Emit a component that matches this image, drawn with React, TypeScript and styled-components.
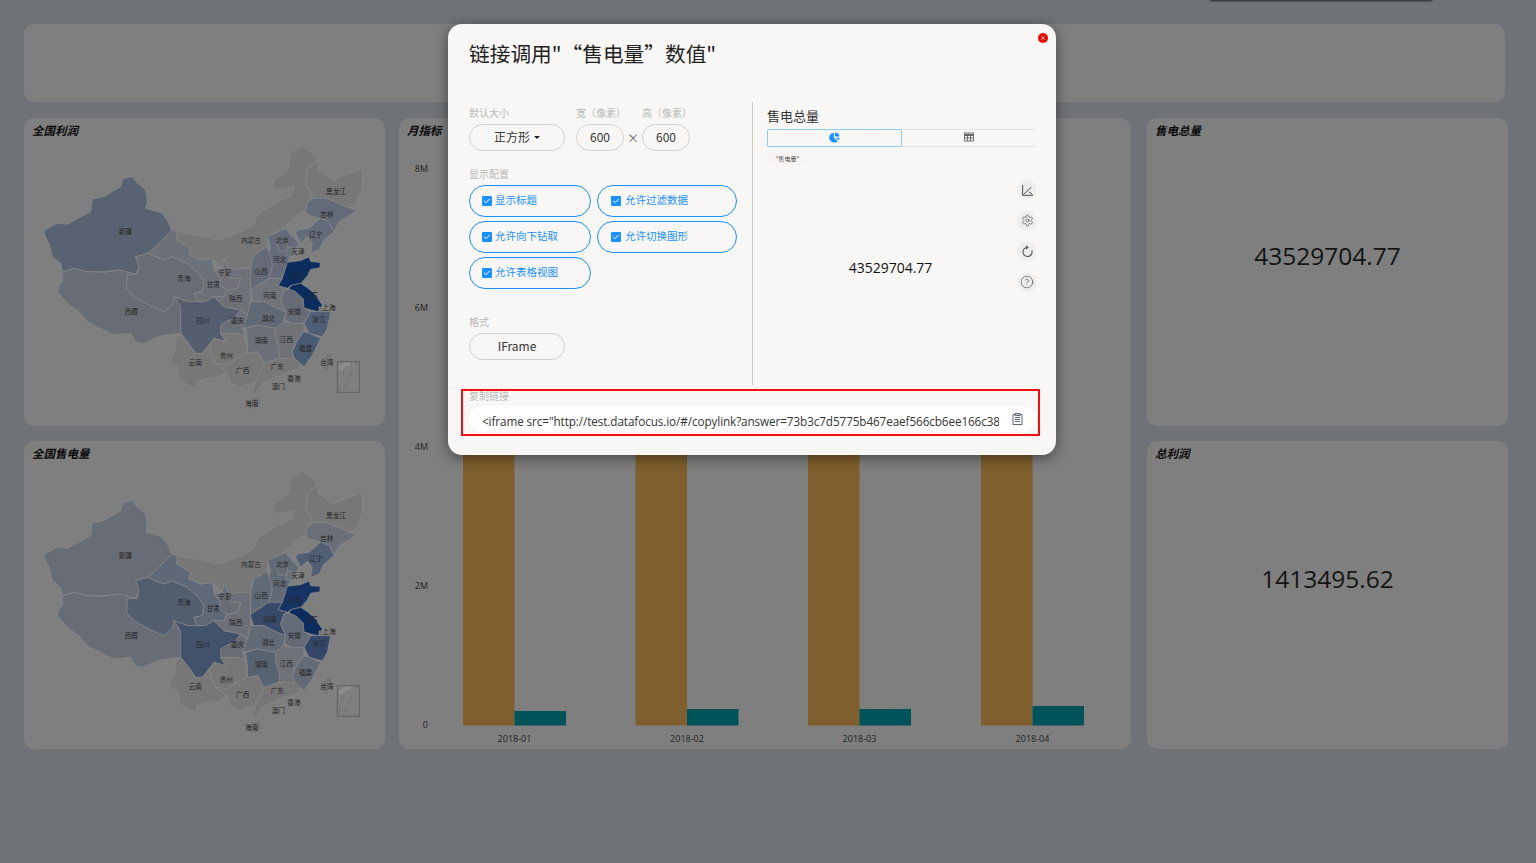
import React from 'react'
import styled, { createGlobalStyle } from 'styled-components'
import { Check, Settings, CircleHelp, X } from 'lucide-react'

const FONT = `"Open Sans", "Noto Sans CJK SC", sans-serif`
const CJK = `"Noto Sans CJK SC", "Open Sans", sans-serif`

const GlobalStyle = createGlobalStyle`
  html, body { margin: 0; padding: 0; height: 100%; overflow: hidden; }
  body { background: #6f7276; font-family: ${FONT}; }
  * { box-sizing: border-box; }
`

const Page = styled.div`
  position: relative;
  width: 1536px;
  height: 863px;
  padding: 24px 0 0 24px;
  overflow: hidden;
`

const TopToast = styled.div`
  position: absolute;
  left: 1210px;
  top: -10px;
  width: 222px;
  height: 10px;
  box-shadow: 0 1px 2px rgba(30, 30, 30, 0.9);
`

const Banner = styled.div`
  width: 1481px;
  height: 78px;
  margin-bottom: 16px;
  background: #7f7f7f;
  border-radius: 10px;
`

const Grid = styled.div`
  display: grid;
  grid-template-columns: 361px 734px 361px;
  grid-template-rows: 308px 308px;
  gap: 15px 14px;
`

const Card = styled.section<{ $tall?: boolean }>`
  background: #7f7f7f;
  border-radius: 10px;
  display: flex;
  flex-direction: column;
  overflow: hidden;
  ${p => p.$tall && 'grid-row: 1 / span 2; grid-column: 2; margin-right: 2px;'}
`

const CardTitle = styled.h3`
  margin: 0;
  height: 24px;
  flex: none;
  padding: 3px 0 0 8px;
  font-family: ${CJK};
  font-size: 11.5px;
  line-height: 18px;
  font-weight: 700;
  font-style: italic;
  color: #0a0a0a;
`

const BigValue = styled.div`
  flex: 1;
  display: flex;
  align-items: center;
  justify-content: center;
  padding: 0 0 57px;
  font-size: 24.5px;
  color: #141414;
`

const MapSvg = styled.svg`
  display: block;
  width: 361px;
  height: 284px;
  text {
    font-family: ${CJK};
    font-size: 20px;
    fill: #262626;
    text-anchor: middle;
  }
`

const ChartSvg = styled.svg`
  display: block;
  width: 732px;
  height: 607px;
  text {
    font-family: ${FONT};
    font-size: 9px;
    fill: #222;
  }
`

type Province = { name: string; points: string; x: number; y: number }

const PROVINCES: Province[] = [
  { name: '新疆', x: 304, y: 351, points: '62,345 100,325 130,328 200,290 205,252 240,245 290,215 298,190 325,185 340,205 365,225 370,265 365,280 410,292 430,315 443,345 405,385 372,415 335,425 345,455 335,478 285,465 240,470 190,470 150,460 115,470 110,445 85,425 75,385 62,360' },
  { name: '西藏', x: 322, y: 589, points: '115,472 150,460 190,470 240,472 285,465 335,478 310,480 308,520 330,545 375,570 420,590 445,570 448,540 470,575 470,655 430,660 400,665 360,685 335,682 320,655 270,660 240,645 190,620 165,590 130,565 100,530 105,510 115,500' },
  { name: '青海', x: 480, y: 492, points: '335,425 372,415 420,435 445,425 490,445 520,470 540,500 535,530 510,535 520,560 490,560 450,545 445,570 420,590 375,570 330,545 308,520 310,480 340,478 345,455' },
  { name: '甘肃', x: 568, y: 509, points: '372,415 405,385 443,345 460,350 458,375 500,400 495,420 530,435 565,430 570,465 590,490 585,510 610,525 600,545 570,545 545,560 520,560 510,535 535,530 540,500 520,470 490,445 445,425 420,435' },
  { name: '内蒙古', x: 681, y: 378, points: '460,350 520,360 585,375 640,355 690,330 700,300 760,260 805,240 810,215 745,225 750,195 790,170 800,115 830,95 860,110 880,135 850,165 845,210 865,240 850,262 845,290 820,300 780,340 730,365 730,395 690,420 680,460 650,460 615,465 600,430 595,460 565,430 530,435 495,420 500,400 458,375' },
  { name: '黑龙江', x: 936, y: 229, points: '880,135 885,165 925,195 1015,160 1015,220 995,270 975,280 945,265 905,250 870,250 850,262 865,240 845,210 850,165' },
  { name: '吉林', x: 908, y: 300, points: '850,262 870,250 905,250 945,265 975,280 997,285 970,305 945,320 930,350 915,320 890,310 855,300 845,290' },
  { name: '辽宁', x: 876, y: 359, points: '820,345 855,340 890,310 915,320 930,350 900,375 885,405 860,415 865,385 850,365 830,385 815,355' },
  { name: '河北', x: 767, y: 433, points: '730,365 785,340 800,360 825,385 815,400 790,395 800,425 790,442 775,490 735,490 745,450 730,430 740,395' },
  { name: '北京', x: 775, y: 377, points: '760,385 790,385 790,405 765,410' },
  { name: '天津', x: 822, y: 410, points: '790,395 815,400 800,425 785,420' },
  { name: '山西', x: 711, y: 470, points: '680,460 690,420 730,395 740,430 745,450 735,490 680,525' },
  { name: '山东', x: 812, y: 483, points: '762,512 775,490 790,442 830,437 855,426 860,440 888,442 888,458 860,463 850,482 835,500 830,505 800,512 790,520' },
  { name: '河南', x: 737, y: 542, points: '680,525 735,490 775,490 762,512 790,520 780,525 770,555 785,590 755,578 720,560 690,560 680,535' },
  { name: '安徽', x: 811, y: 590, points: '795,522 815,530 838,552 840,578 860,590 855,600 840,625 800,625 780,610 785,590 770,555 780,525' },
  { name: '江苏', x: 862, y: 541, points: '800,512 830,505 850,518 870,535 895,570 885,590 860,585 840,578 838,552 815,530 795,522' },
  { name: '上海', x: 915, y: 578, points: '885,575 900,580 895,592 885,590' },
  { name: '浙江', x: 885, y: 615, points: '860,590 885,590 920,590 910,640 895,665 855,655 840,625 855,600' },
  { name: '福建', x: 844, y: 702, points: '840,650 855,655 890,670 865,720 840,755 810,730 805,710 820,675' },
  { name: '江西', x: 787, y: 674, points: '755,640 780,620 800,625 840,625 840,650 820,675 805,710 810,730 765,730 765,700 755,670' },
  { name: '湖北', x: 733, y: 611, points: '655,640 670,600 680,560 720,560 755,578 785,590 780,610 780,620 755,640 700,630' },
  { name: '湖南', x: 712, y: 677, points: '665,640 700,630 755,640 755,670 765,700 765,730 720,745 700,710 670,715 670,680' },
  { name: '重庆', x: 640, y: 618, points: '590,630 605,620 630,610 650,585 670,600 655,640 665,665 640,655 590,655' },
  { name: '四川', x: 536, y: 618, points: '470,575 450,545 490,560 520,560 545,560 570,545 600,575 650,585 630,610 605,620 590,630 590,655 605,680 570,670 555,690 535,715 515,715 490,680 470,655' },
  { name: '陕西', x: 636, y: 550, points: '615,465 650,460 680,460 680,525 680,560 670,600 650,585 600,575 570,545 600,545 610,525 640,520 650,490 620,490' },
  { name: '宁夏', x: 603, y: 474, points: '600,430 615,465 620,490 650,490 640,520 610,525 585,510 590,490 570,465 595,460' },
  { name: '贵州', x: 607, y: 721, points: '555,690 570,670 605,680 590,655 640,655 665,665 670,715 640,730 610,750 575,745 560,715' },
  { name: '云南', x: 514, y: 743, points: '470,655 490,680 515,715 535,715 555,690 560,715 575,745 610,770 585,785 550,790 520,800 515,820 490,810 465,790 460,755 435,745 455,700 455,670' },
  { name: '广西', x: 656, y: 767, points: '575,745 610,750 640,730 670,715 700,710 720,745 695,800 650,815 620,805 610,770' },
  { name: '广东', x: 760, y: 755, points: '720,745 765,730 810,730 830,745 825,760 770,780 720,800 695,835 685,830 695,800' },
  { name: '海南', x: 683, y: 867, points: '665,860 690,845 712,845 712,870 690,885 670,880' },
  { name: '台湾', x: 908, y: 742, points: '905,715 925,710 925,730 910,772 892,760 895,735' },
]

const GREY = '#777777'

const PROFIT_FILLS: Record<string, string> = {
  新疆: '#586271', 西藏: '#686c75', 青海: '#686c75', 甘肃: '#6c7078', 吉林: '#636a78', 辽宁: '#636a78',
  河北: '#656b78', 北京: '#656b78', 天津: '#6c7078', 山西: '#646a76', 山东: '#0b2c5f', 江苏: '#0b2c5f',
  河南: '#70737a', 安徽: '#666b75', 浙江: '#4f5e74', 福建: '#485972', 江西: '#707278', 湖北: '#616975',
  湖南: '#6d7078', 重庆: '#6b6f77', 四川: '#545e6f', 陕西: '#6e7178', 宁夏: '#707278',
}

const SALES_FILLS: Record<string, string> = {
  新疆: '#686c75', 西藏: '#686c75', 青海: '#535e6e', 甘肃: '#5e6877', 吉林: '#6b6f78', 辽宁: '#4f5e73',
  河北: '#626a76', 北京: '#626a76', 天津: '#6c7078', 山西: '#606a76', 山东: '#163363', 江苏: '#0b2c5f',
  河南: '#374a69', 安徽: '#646a76', 浙江: '#34476a', 福建: '#646a76', 江西: '#6e7178', 湖北: '#626a76',
  湖南: '#586372', 重庆: '#686c75', 四川: '#41526a', 陕西: '#6c6f77', 宁夏: '#686c75',
}

const ChinaMap = ({ fills, shift = 0 }: { fills: Record<string, string>; shift?: number }) => (
  <MapSvg viewBox={`0 ${81 - shift} 1083 852`}>
    {PROVINCES.map(p => (
      <polygon key={p.name} points={p.points} fill={fills[p.name] || GREY} stroke="#8a8a8a" strokeWidth="2" strokeLinejoin="round" />
    ))}
    {PROVINCES.map(p => (
      <text key={p.name} x={p.x} y={p.y + 7}>{p.name}</text>
    ))}
    <text x={810} y={798}>香港</text>
    <text x={763} y={822}>澳门</text>
    <path d="M940 832V740H1006V832Z" fill="none" stroke="#444" strokeWidth="1.5" />
    <path d="M942 760Q955 742 980 742L978 752Q962 752 952 768Z" fill="#8e8e8e" />
    <path d="M960 772L950 790M948 812L944 826M985 770L972 790M968 806L958 826M998 742L994 752" fill="none" stroke="#555" strokeWidth="1.5" strokeDasharray="6 4" />
  </MapSvg>
)

const AXIS = [['8M', 168], ['6M', 307], ['4M', 446], ['2M', 585], ['0', 724]] as const

const BARS = [
  { label: '2018-01', x: 463, top: 711 },
  { label: '2018-02', x: 635.5, top: 709 },
  { label: '2018-03', x: 808, top: 709 },
  { label: '2018-04', x: 981, top: 706 },
]

const BarChart = () => (
  <ChartSvg viewBox="399 142 732 607">
    {AXIS.map(([t, y]) => (
      <text key={t} x={428} y={y + 4} textAnchor="end">{t}</text>
    ))}
    {BARS.map(b => (
      <g key={b.label}>
        <rect x={b.x} y={200} width={51.5} height={525.5} fill="#7e5f2d" />
        <rect x={b.x + 51.5} y={b.top} width={51.5} height={725.5 - b.top} fill="#005358" />
        <text x={b.x + 51.5} y={742} textAnchor="middle">{b.label}</text>
      </g>
    ))}
  </ChartSvg>
)

const Modal = styled.div`
  position: absolute;
  left: 448px;
  top: 24px;
  width: 608px;
  height: 431px;
  padding: 15px 20px 0 21px;
  background: #f8f7f5;
  border-radius: 14px;
  box-shadow: 0 3px 14px rgba(0, 0, 0, 0.45);
  color: #222;
`

const CloseButton = styled.span`
  position: absolute;
  right: 8px;
  top: 9px;
  width: 10px;
  height: 10px;
  border-radius: 50%;
  background: #f00000;
  display: flex;
  align-items: center;
  justify-content: center;
  color: #fff;
`

const ModalTitle = styled.h2`
  margin: 0;
  height: 63px;
  font-family: ${CJK};
  font-size: 20.7px;
  line-height: 28px;
  font-weight: 400;
  color: #222;
`

const Body = styled.div`
  display: flex;
  height: 283px;
  font-family: ${CJK};
`

const LeftPane = styled.div`
  width: 284px;
  border-right: 1px solid #cacaca;
  flex: none;
`

const RightPane = styled.div`
  position: relative;
  width: 284px;
  margin-left: 14px;
  flex: none;
`

const FieldLabel = styled.div`
  font-family: ${CJK};
  font-size: 10px;
  line-height: 14px;
  color: #b9b9b9;
  white-space: nowrap;
`

const SizeRow = styled.div`
  display: grid;
  grid-template-columns: 107px 48px 18px 48px;
  align-items: end;
  margin: 4px 0 16px;
`

const FieldCol = styled.div`
  display: flex;
  flex-direction: column;
  gap: 4px;
  min-width: 0;
`

const Pill = styled.div<{ $w: number; $mt?: number }>`
  width: ${p => p.$w}px;
  height: 27px;
  padding-bottom: 2px;
  border: 1px solid #d2d1ce;
  border-radius: 14px;
  display: flex;
  align-items: center;
  justify-content: center;
  gap: 4px;
  font-size: 12px;
  color: #333;
  margin-top: ${p => p.$mt || 0}px;
`

const Caret = styled.i`
  width: 0;
  height: 0;
  margin-top: 2px;
  border-left: 3px solid transparent;
  border-right: 3px solid transparent;
  border-top: 3px solid #222;
`

const Times = styled.span`
  height: 27px;
  text-align: center;
  font-size: 12px;
  line-height: 27px;
  color: #666;
`

const OptionGrid = styled.div`
  display: grid;
  grid-template-columns: 122px 140px;
  column-gap: 6px;
  row-gap: 4px;
  margin: 4px 0 26px;
`

const Option = styled.div`
  height: 32px;
  border: 1.5px solid #1890ff;
  border-radius: 16px;
  display: flex;
  align-items: center;
  padding-left: 12px;
  gap: 3px;
  font-size: 10.5px;
  color: #1890ff;
  &:nth-child(even) {
    padding-left: 13px;
    gap: 4px;
  }
`

const OptionText = styled.span`
  margin-top: -4px;
`

const CheckMark = styled.span`
  width: 10px;
  height: 10px;
  margin-top: -1px;
  border-radius: 1px;
  background: #1890ff;
  color: #fff;
  display: flex;
  align-items: center;
  justify-content: center;
`

const PanelTitle = styled.div`
  margin-top: 5px;
  height: 22px;
  font-size: 13px;
  line-height: 18px;
  color: #333;
`

const Tabs = styled.div`
  display: flex;
  width: 269px;
  height: 18px;
  border-top: 1px solid #e4e4e4;
  border-bottom: 1px solid #e4e4e4;
`

const Tab = styled.div<{ $active?: boolean }>`
  flex: ${p => (p.$active ? '0 0 135px' : '1')};
  margin: -1px 0;
  padding-bottom: 2px;
  display: flex;
  align-items: center;
  justify-content: center;
  border-radius: 2px;
  border: 1.5px solid ${p => (p.$active ? '#8ccafc' : 'transparent')};
`

const Chip = styled.div`
  width: 41px;
  height: 12px;
  margin-top: 6px;
  border-radius: 2px;
  background: #f6f5f3;
  text-align: center;
  font-size: 6px;
  line-height: 12px;
  color: #444;
`

const PanelValue = styled.div`
  width: 247px;
  margin-top: 93px;
  text-align: center;
  font-family: ${FONT};
  font-size: 14px;
  line-height: 20px;
  color: #111;
`

const SideTools = styled.div`
  position: absolute;
  left: 250px;
  top: 78px;
  width: 19px;
  overflow: hidden;
  display: flex;
  flex-direction: column;
  gap: 10.6px;
`

const SideTool = styled.div`
  width: 20px;
  height: 20px;
  border-radius: 50%;
  background: #efeeee;
  display: flex;
  align-items: center;
  justify-content: center;
  color: #444;
`

const CopySection = styled.div`
  margin-top: 4px;
`

const CopyBox = styled.div`
  width: 567px;
  height: 26px;
  margin-top: 3px;
  padding: 0 0 0 13px;
  background: #fff;
  border-radius: 13px;
  display: flex;
  align-items: center;
  color: #555;
`

const CopyText = styled.div`
  width: 517px;
  flex: none;
  margin-right: 12px;
  padding-top: 3px;
  overflow: hidden;
  white-space: nowrap;
  font-size: 11.7px;
  letter-spacing: -0.08px;
  color: #333;
`

const RedMark = styled.div`
  position: absolute;
  left: 13px;
  top: 365px;
  width: 579px;
  height: 47px;
  border: 2px solid #f01010;
`

const PieIcon = () => (
  <svg width="11" height="11" viewBox="0 0 10 10">
    <path d="M4.4 0.6V5.2L8 8.2A4.5 4.5 0 1 1 4.4 0.6Z" fill="#1890ff" />
    <path d="M5.4 0.5A4.4 4.4 0 0 1 9.6 4.2H5.4Z" fill="#1890ff" />
    <path d="M6 5.2H9.6A4.4 4.4 0 0 1 8.8 7.4Z" fill="#1890ff" />
  </svg>
)

const TableIcon = () => (
  <svg width="10" height="10" viewBox="0 0 10 10" fill="none" stroke="#666" strokeWidth="0.9">
    <rect x="0.5" y="1" width="9" height="8" />
    <path d="M0.5 3H9.5" strokeWidth="2" />
    <path d="M0.5 6H9.5M3.5 3V9M6.5 3V9" />
  </svg>
)

const AxisIcon = () => (
  <svg width="13" height="13" viewBox="0 0 12 12" fill="none" stroke="#444" strokeWidth="0.9">
    <path d="M1.5 1V10.5H11" />
    <path d="M2.5 9.5L9.5 3" />
    <path d="M7.5 7.5L10.5 9.5" />
  </svg>
)

const RefreshIcon = () => (
  <svg width="13" height="13" viewBox="0 0 12 12" fill="none" stroke="#555" strokeWidth="1">
    <path d="M6 2.2A4.2 4.2 0 1 0 10 5" />
    <path d="M4.6 0.6L6.4 2.2L4.6 3.8" />
  </svg>
)

const CopyIcon = () => (
  <svg width="13" height="14" viewBox="0 0 13 14" fill="none" stroke="#5c6670" strokeWidth="1">
    <path d="M4 2.5H2V12.5H11V2.5H9" />
    <path d="M4 1.5H9V3.5H4Z" fill="#c9d3dd" />
    <path d="M4 5.5H9M4 7.5H9M4 9.5H9" />
  </svg>
)

const OPTIONS = ['显示标题', '允许过滤数据', '允许向下钻取', '允许切换图形', '允许表格视图']

const App = () => (
  <Page>
    <GlobalStyle />
    <TopToast />
    <Banner />
    <Grid>
      <Card>
        <CardTitle>全国利润</CardTitle>
        <ChinaMap fills={PROFIT_FILLS} />
      </Card>
      <Card $tall>
        <CardTitle>月指标</CardTitle>
        <BarChart />
      </Card>
      <Card>
        <CardTitle>售电总量</CardTitle>
        <BigValue>43529704.77</BigValue>
      </Card>
      <Card>
        <CardTitle>全国售电量</CardTitle>
        <ChinaMap fills={SALES_FILLS} shift={3} />
      </Card>
      <Card>
        <CardTitle>总利润</CardTitle>
        <BigValue>1413495.62</BigValue>
      </Card>
    </Grid>

    <Modal>
      <CloseButton><X size={6} strokeWidth={3} /></CloseButton>
      <ModalTitle>链接调用"“售电量”数值"</ModalTitle>
      <Body>
        <LeftPane>
          <SizeRow>
            <FieldCol>
              <FieldLabel>默认大小</FieldLabel>
              <Pill $w={96}>正方形 <Caret /></Pill>
            </FieldCol>
            <FieldCol>
              <FieldLabel>宽（像素）</FieldLabel>
              <Pill $w={48}>600</Pill>
            </FieldCol>
            <Times>×</Times>
            <FieldCol>
              <FieldLabel>高（像素）</FieldLabel>
              <Pill $w={48}>600</Pill>
            </FieldCol>
          </SizeRow>
          <FieldLabel>显示配置</FieldLabel>
          <OptionGrid>
            {OPTIONS.map(o => (
              <Option key={o}>
                <CheckMark><Check size={8} strokeWidth={3} /></CheckMark>
                <OptionText>{o}</OptionText>
              </Option>
            ))}
          </OptionGrid>
          <FieldLabel>格式</FieldLabel>
          <Pill $w={96} $mt={4}>IFrame</Pill>
        </LeftPane>
        <RightPane>
          <PanelTitle>售电总量</PanelTitle>
          <Tabs>
            <Tab $active><PieIcon /></Tab>
            <Tab><TableIcon /></Tab>
          </Tabs>
          <Chip>"售电量"</Chip>
          <PanelValue>43529704.77</PanelValue>
          <SideTools>
            <SideTool><AxisIcon /></SideTool>
            <SideTool><Settings size={13} strokeWidth={1.2} /></SideTool>
            <SideTool><RefreshIcon /></SideTool>
            <SideTool><CircleHelp size={14} strokeWidth={1.1} /></SideTool>
          </SideTools>
        </RightPane>
      </Body>
      <CopySection>
        <FieldLabel>复制链接</FieldLabel>
        <CopyBox>
          <CopyText>{'<iframe src="http://test.datafocus.io/#/copylink?answer=73b3c7d5775b467eaef566cb6ee166c38e2c8f1d" width="600" height="600"></iframe>'}</CopyText>
          <CopyIcon />
        </CopyBox>
      </CopySection>
      <RedMark />
    </Modal>
  </Page>
)

export default App
